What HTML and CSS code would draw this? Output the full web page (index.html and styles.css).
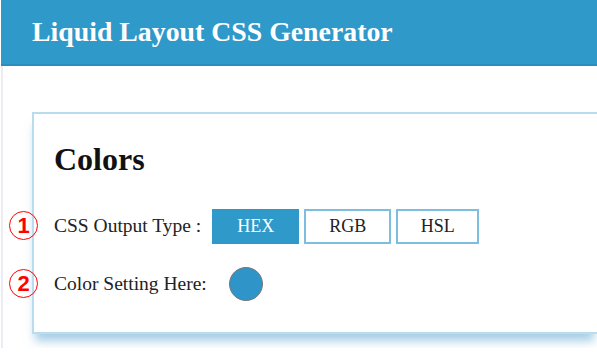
FILE: index.html
```html
<!DOCTYPE html>
<html>
<head>
  <title>Liquid Layout CSS Generator</title>
  <link rel="stylesheet" href="styles.css">
</head>
<body>
  <div class="header">
    <h1>Liquid Layout CSS Generator</h1>
  </div>

  <div class="page">
    <div class="card">
      <h2>Colors</h2>

      <div class="row">
        <span class="marker">1</span>
        <span class="label">CSS Output Type :</span>
        <div class="switch">
          <button class="active">HEX</button>
          <button>RGB</button>
          <button>HSL</button>
        </div>
      </div>

      <div class="row">
        <span class="marker">2</span>
        <span class="label">Color Setting Here:</span>
        <span class="swatch"></span>
      </div>
    </div>
  </div>
</body>
</html>
```

FILE: styles.css
```css
body {
  font-family: "Liberation Serif", "Times New Roman", serif;
  margin: 0;
  padding: 0;
  background-color: #fff;
  color: #222;
  overflow: hidden;
}

.header {
  height: 64px;
  margin-left: 1px;
  padding-left: 31px;
  background-color: #2f99ca;
  border-bottom: 2px solid #2a8dbf;
  display: flex;
  align-items: center;
}

.header h1 {
  margin: 0;
  color: #fff;
  font-size: 27.8px;
  font-weight: bold;
}

.page {
  margin-left: 1px;
  border-left: 2px solid #ecebf3;
  padding: 46px 0 14px 29px;
}

.card {
  border: 2px solid #b9dcee;
  border-right: none;
  padding: 27px 0 30px 20px;
  box-shadow: 0 10px 9px -3px rgba(80, 160, 205, 0.5);
}

.card h2 {
  margin: 0 0 30px;
  font-size: 32px;
  font-weight: bold;
  color: #111;
}

.row {
  position: relative;
  display: flex;
  align-items: center;
  height: 36px;
  margin-bottom: 22px;
}

.row:last-child {
  margin-bottom: 0;
}

.marker {
  position: absolute;
  left: -45px;
  top: 3px;
  width: 27px;
  height: 27px;
  border: 1.5px solid #f00;
  border-radius: 50%;
  color: #f00;
  font-family: "Liberation Sans", Arial, sans-serif;
  font-weight: bold;
  font-size: 22px;
  line-height: 27px;
  text-align: center;
}

.label {
  font-size: 19.5px;
}

.switch {
  display: flex;
  gap: 5px;
  margin-left: 11px;
}

.switch button {
  width: 87px;
  height: 35px;
  padding: 0;
  background-color: #fff;
  border: 2px solid #7cbde0;
  font-family: inherit;
  font-size: 18px;
  color: #222;
  cursor: pointer;
}

.switch button:last-child {
  width: 83px;
}

.switch button.active {
  background-color: #2f99ca;
  border-color: #2f99ca;
  color: #fff;
}

.swatch {
  width: 32px;
  height: 32px;
  margin-left: 22px;
  border-radius: 50%;
  background-color: #2f95c9;
  border: 1px solid #777;
}
```
